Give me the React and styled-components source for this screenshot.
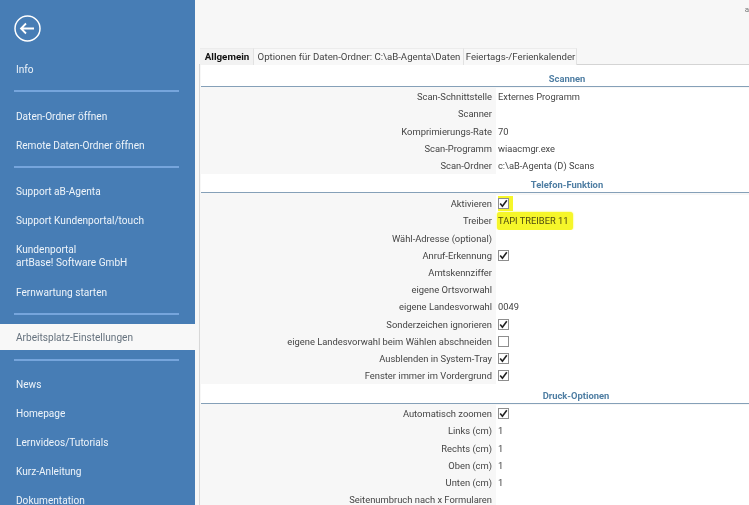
import React from "react";
import styled, { createGlobalStyle } from "styled-components";

const GlobalStyle = createGlobalStyle`
  html, body {
    margin: 0;
    padding: 0;
    background: #f7f7f7;
    font-family: Roboto, "Open Sans", sans-serif;
  }
`;

const Page = styled.div`
  width: 749px;
  height: 505px;
  display: flex;
  overflow: hidden;
  position: relative;
  background: #f7f7f7;
  filter: blur(0.3px);
`;

const Sidebar = styled.nav`
  flex: 0 0 195px;
  width: 195px;
  height: 505px;
  background: #477db5;
  box-sizing: border-box;
  padding-top: 15px;
  display: flex;
  flex-direction: column;
`;

const BackButton = styled.div`
  margin-left: 14px;
  width: 27px;
  height: 27px;
  margin-bottom: 13px;
  color: #fff;
`;

const NavItem = styled.div`
  padding: 8px 0 ${({ $tall }) => ($tall ? 9 : 8)}px 16px;
  font-size: 10.1px;
  line-height: 13px;
  color: #eef4fa;
  white-space: nowrap;
`;

const Divider = styled.div`
  height: 2px;
  margin: ${({ $top }) => $top ?? 6}px 16px ${({ $bottom }) => $bottom ?? 10}px 14px;
  background: #76a5dc;
  flex: none;
`;

const ActiveItem = styled.div`
  flex: none;
  width: 198px;
  height: 26px;
  position: relative;
  z-index: 1;
  background: #f8f8f8;
  color: #66727e;
  font-size: 10.1px;
  line-height: 27px;
  padding-left: 16px;
  box-sizing: border-box;
`;

const Content = styled.main`
  flex: 1;
  min-width: 0;
  padding-top: 48px;
  padding-left: 4px;
  position: relative;
`;

const CornerMark = styled.span`
  position: absolute;
  top: 5px;
  right: 0;
  font-size: 8px;
  color: #777;
`;

const TabBar = styled.div`
  display: flex;
  height: 16px;
  width: 880px;
  padding-left: 1px;
  border-bottom: 1px solid #d4d4d4;
`;

const Tab = styled.div`
  box-sizing: border-box;
  width: ${({ $w }) => $w}px;
  height: 17px;
  padding-left: 1px;
  font-size: ${({ $active }) => ($active ? 9.8 : 9.65)}px;
  line-height: 16px;
  text-align: center;
  white-space: nowrap;
  color: ${({ $active }) => ($active ? "#111" : "#444")};
  font-weight: ${({ $active }) => ($active ? 700 : 400)};
  background: ${({ $active }) => ($active ? "#f2f2f2" : "#f8f8f8")};
  border-right: 1px solid #e2e2e2;
  border-top: 1px solid #ececec;
`;

const Panel = styled.div`
  width: 734px;
  border-left: 1px solid #d8d8d8;
  box-sizing: border-box;
  padding-left: 1px;
`;

const SectionTitle = styled.div`
  box-sizing: border-box;
  height: ${({ $h }) => $h}px;
  background: #fff;
  border-bottom: 1px solid #85a0b8;
  color: #4f7ea3;
  font-size: 9.4px;
  font-weight: 700;
  line-height: 1;
  display: flex;
  align-items: flex-end;
  justify-content: center;
  padding-bottom: 2.5px;
  padding-left: ${({ $shift }) => $shift ?? 0}px;
`;

const Rows = styled.div`
  display: grid;
  grid-template-columns: 295px 1fr;
  grid-auto-rows: 17.2px;
  padding-top: ${({ $pad }) => $pad ?? 1.3}px;
`;

const Label = styled.div`
  font-size: 9.4px;
  line-height: 17.2px;
  text-align: right;
  padding-right: 4px;
  color: #444;
  white-space: nowrap;
`;

const Value = styled.div`
  background: #fff;
  font-size: 9.3px;
  line-height: 17.2px;
  padding-left: 2px;
  color: #444;
  white-space: nowrap;
  display: flex;
  align-items: center;
`;

const Highlight = styled.span`
  background: #f6f62a;
  color: #4f4a10;
  padding: 3px 5px 3px 1px;
  margin-left: -1px;
  border-radius: 3px;
  line-height: 12px;
  box-shadow: 0 0 2px #f6f62a;
`;

const CheckBox = styled.span`
  box-sizing: border-box;
  width: 11px;
  height: 11px;
  border: 1px solid #8e8e8e;
  background: #fff;
  display: inline-flex;
  align-items: center;
  justify-content: center;
  box-shadow: ${({ $marked }) => ($marked ? "2px 0 0 2px #f6f62a" : "none")};
`;

const Check = () => (
  <svg width="9" height="9" viewBox="0 0 9 9" fill="none">
    <path d="M1.2 4.6 L3.4 7.2 L7.8 1.3" stroke="#222" strokeWidth="1.6" />
  </svg>
);

const Box = ({ on = true, marked }) => (
  <CheckBox $marked={marked}>{on && <Check />}</CheckBox>
);

const navTop = ["Daten-Ordner öffnen", "Remote Daten-Ordner öffnen"];
const navSupport = ["Support aB-Agenta", "Support Kundenportal/touch"];
const navBottom = ["News", "Homepage", "Lernvideos/Tutorials", "Kurz-Anleitung", "Dokumentation"];

const scanRows = [
  ["Scan-Schnittstelle", "Externes Programm"],
  ["Scanner", ""],
  ["Komprimierungs-Rate", "70"],
  ["Scan-Programm", "wiaacmgr.exe"],
  ["Scan-Ordner", "c:\\aB-Agenta (D) Scans"],
];

const phoneRows = [
  ["Aktivieren", <Box marked />],
  ["Treiber", <Highlight>TAPI TREIBER 11</Highlight>],
  ["Wähl-Adresse (optional)", ""],
  ["Anruf-Erkennung", <Box />],
  ["Amtskennziffer", ""],
  ["eigene Ortsvorwahl", ""],
  ["eigene Landesvorwahl", "0049"],
  ["Sonderzeichen ignorieren", <Box />],
  ["eigene Landesvorwahl beim Wählen abschneiden", <Box on={false} />],
  ["Ausblenden in System-Tray", <Box />],
  ["Fenster immer im Vordergrund", <Box />],
];

const printRows = [
  ["Automatisch zoomen", <Box />],
  ["Links (cm)", "1"],
  ["Rechts (cm)", "1"],
  ["Oben (cm)", "1"],
  ["Unten (cm)", "1"],
  ["Seitenumbruch nach x Formularen", ""],
];

const RowList = ({ rows, pad }) => (
  <Rows $pad={pad}>
    {rows.map(([label, value]) => (
      <React.Fragment key={label}>
        <Label>{label}</Label>
        <Value>{value}</Value>
      </React.Fragment>
    ))}
  </Rows>
);

export default function App() {
  return (
    <Page>
      <GlobalStyle />
      <Sidebar>
        <BackButton>
          <svg width="27" height="27" viewBox="0 0 27 27" fill="none" stroke="currentColor">
            <circle cx="13.5" cy="13.5" r="12.5" strokeWidth="1.5" />
            <path d="M7 13.5 H20 M12 8.5 L7 13.5 L12 18.5" strokeWidth="1.8" />
          </svg>
        </BackButton>
        <NavItem>Info</NavItem>
        <Divider />
        {navTop.map((t) => <NavItem key={t}>{t}</NavItem>)}
        <Divider $bottom={9} />
        {navSupport.map((t) => <NavItem key={t}>{t}</NavItem>)}
        <NavItem $tall>Kundenportal<br />artBase! Software GmbH</NavItem>
        <NavItem>Fernwartung starten</NavItem>
        <Divider $bottom={9} />
        <ActiveItem>Arbeitsplatz-Einstellungen</ActiveItem>
        <Divider $top={9} $bottom={9} />
        {navBottom.map((t) => <NavItem key={t}>{t}</NavItem>)}
      </Sidebar>
      <Content>
        <CornerMark>a</CornerMark>
        <TabBar>
          <Tab $active $w={54}>Allgemein</Tab>
          <Tab $w={210}>Optionen für Daten-Ordner: C:\aB-Agenta\Daten</Tab>
          <Tab $w={113}>Feiertags-/Ferienkalender</Tab>
        </TabBar>
        <Panel>
          <SectionTitle $h={22}>Scannen</SectionTitle>
          <RowList rows={scanRows} />
          <SectionTitle $h={18.7}>Telefon-Funktion</SectionTitle>
          <RowList rows={phoneRows} pad={2.3} />
          <SectionTitle $h={19.7} $shift={18}>Druck-Optionen</SectionTitle>
          <RowList rows={printRows} />
        </Panel>
      </Content>
    </Page>
  );
}
